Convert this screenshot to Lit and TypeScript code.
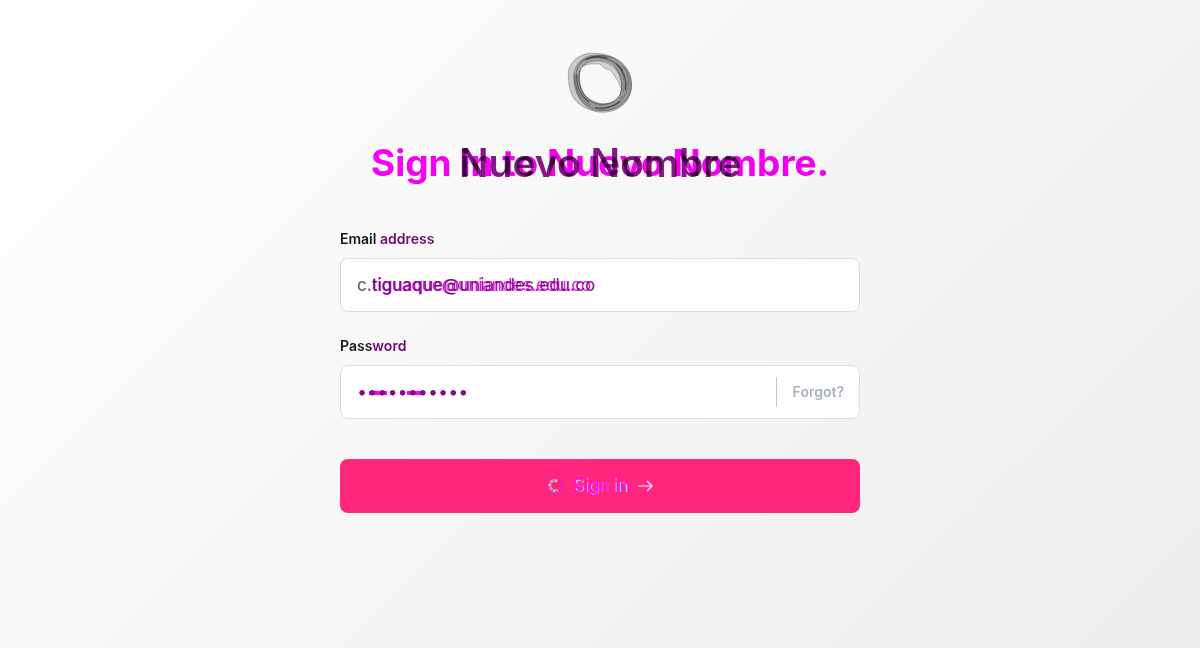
import { LitElement, html, css, svg } from "lit";
import { customElement, state } from "lit/decorators.js";

@customElement("brand-ring")
export class BrandRing extends LitElement {
  static styles = css`
    :host { display: block; line-height: 0; }
    svg { width: 66px; height: 61px; }
  `;

  render() {
    return html`<svg viewBox="52 36 200 184" role="img" aria-label="Nuevo Nombre">
      ${svg`
        <g stroke="#333" stroke-width="1.5" stroke-opacity=".65" fill="#777" fill-opacity=".36" fill-rule="evenodd">
          <path d="M56 103C55 80 72 50 111 41C152 34 202 47 222 76C246 99 256 138 241 168C229 198 202 215 168 218C138 220 104 207 84 189C64 171 56 142 56 103ZM79 103C74 132 87 169 116 184C142 201 187 204 211 181C234 156 228 106 199 77C171 52 139 49 112 57C93 66 82 86 79 103Z"/>
          <path d="M72 112C74 82 88 57 118 48C154 36 202 55 224 81C251 111 252 151 229 181C204 211 163 219 133 212C98 200 72 160 72 112ZM89 101C86 138 100 168 129 183C158 199 194 194 210 170C223 144 218 106 195 84C173 65 144 59 119 65C101 73 92 84 89 101Z"/>
          <path d="M86 76C106 45 159 38 196 54C231 68 249 105 247 137C247 172 225 197 196 208C164 218 129 213 104 191C76 171 72 112 86 76ZM93 86C84 123 93 163 122 182C151 202 195 198 213 168C228 137 220 103 196 78C169 54 120 56 93 86Z"/>
        </g>
        <path d="M103 71C122 52 168 48 194 67C218 78 230 115 223 156C211 143 212 128 202 118C192 104 186 86 174 88C164 87 158 74 149 71C135 74 117 67 101 80Z" fill="#999" fill-opacity=".4" stroke="#777" stroke-width="1.5"/>
        <g fill="none" stroke="#222" stroke-opacity=".65">
          <path stroke-width="4" d="M82 104C80 137 93 169 120 188M137 204C165 209 192 203 214 185M108 59C130 47 156 47 174 55M203 72C223 93 235 119 229 150"/>
          <path stroke-width="2" d="M91 89C83 123 91 159 119 181C148 201 187 199 209 171C225 150 220 105 196 80M119 54C157 45 204 63 222 92"/>
          <path stroke-width="1.5" d="M74 98C73 140 87 175 124 199M221 78C245 107 243 147 219 179M92 72C108 49 147 42 187 52M150 211C180 207 210 191 220 168"/>
        </g>
      `}
    </svg>`;
  }
}

@customElement("app-root")
export class AppRoot extends LitElement {
  @state() private email = "c.tiguaque@uniandes.edu.co";
  @state() private password = "nombre12345";

  static styles = css`
    :host {
      display: block;
      min-height: 100vh;
      box-sizing: border-box;
      padding: 52px 24px 48px;
      background: linear-gradient(135deg, #fff, #ededed);
      font-family: Inter, "Liberation Sans", sans-serif;
      color: #15181b;
    }
    *, *::before { box-sizing: border-box; }
    main { display: flex; flex-direction: column; align-items: center; }
    .heading {
      display: grid;
      justify-items: center;
      margin: 24px 0 40px;
      font-size: 39px;
      line-height: 52px;
      font-weight: 600;
      white-space: nowrap;
    }
    .heading > * { grid-area: 1 / 1; }
    .brand { color: #8a148a; }
    .welcome { font-size: 37px; font-weight: 700; color: #980098; mix-blend-mode: color-burn; }
    form { width: 100%; max-width: 520px; display: flex; flex-direction: column; }
    .label { font-size: 14px; line-height: 20px; font-weight: 600; margin-bottom: 9px; }
    .tint { color: #740878; }
    .field {
      display: flex;
      align-items: center;
      height: 54px;
      margin-bottom: 24px;
      border: 1px solid #dcdddf;
      border-radius: 8px;
      background: #fefefe;
    }
    .entry { flex: 1; min-width: 0; display: grid; }
    .entry > * {
      grid-area: 1 / 1;
      width: 100%;
      margin: 0;
      padding: 0 16px;
      border: 0;
      outline: 0;
      background: none;
      font: 400 17px/24px Inter, sans-serif;
    }
    .entry > .echo {
      color: transparent;
      background: linear-gradient(90deg, transparent 32px, #e000e0 32px);
      background-clip: text;
      -webkit-background-clip: text;
      mix-blend-mode: color-burn;
      pointer-events: none;
    }
    .entry > .typed {
      font-weight: 500;
      color: transparent;
      background: linear-gradient(90deg, #63676e 32px, #80308a 32px);
      background-clip: text;
      -webkit-background-clip: text;
    }
    .entry > .secret {
      font-size: 18px;
      color: #850a8a;
      background:
        linear-gradient(#f0f, #f0f) 28px 11px / 18px 4px no-repeat,
        linear-gradient(#f0f, #f0f) 66px 11px / 18px 4px no-repeat;
    }
    .forgot {
      border-left: 1px solid #c4c8cc;
      padding: 0 15px 0 16px;
      font-size: 14px;
      line-height: 30px;
      font-weight: 600;
      color: #a9b2bd;
      text-decoration: none;
    }
    .submit {
      display: flex;
      align-items: center;
      justify-content: center;
      gap: 8px;
      height: 54px;
      margin-top: 16px;
      border: 0;
      border-radius: 8px;
      background: #ff267c;
      color: #fff;
      font: 500 17px/24px Inter, sans-serif;
    }
    .spinner { width: 18px; height: 18px; }
    .caption { display: grid; justify-items: center; }
    .caption > * { grid-area: 1 / 1; }
    .front { color: #e8d5e0; }
    .shade { color: #f0f; font-size: 18px; font-weight: 400; }
    .arrow { width: 15px; height: 14px; }
  `;

  render() {
    return html`<main>
      <brand-ring></brand-ring>
      <h1 class="heading">
        <span class="brand">Nuevo Nombre</span>
        <span class="welcome">Sign in to Nuevo Nombre.</span>
      </h1>
      <form @submit=${(e: Event) => e.preventDefault()}>
        <label class="label" for="email">Email <span class="tint">address</span></label>
        <div class="field">
          <div class="entry">
            <input class="typed" id="email" type="email" .value=${this.email}
              @input=${(e: InputEvent) => (this.email = (e.target as HTMLInputElement).value)} />
            <span class="echo" aria-hidden="true">${this.email}</span>
          </div>
        </div>
        <label class="label" for="password">Pass<span class="tint">word</span></label>
        <div class="field">
          <div class="entry">
            <input class="secret" id="password" type="password" .value=${this.password}
              @input=${(e: InputEvent) => (this.password = (e.target as HTMLInputElement).value)} />
          </div>
          <a class="forgot" href="#forgot">Forgot?</a>
        </div>
        <button class="submit" type="submit">
          <svg class="spinner" viewBox="0 0 18 18" fill="none" aria-hidden="true">
            <circle cx="9" cy="9" r="7" stroke="#e81fc0" stroke-width="4" stroke-dasharray="2 2"/>
            <path d="M10 4.5C6 2 3 5 3 8C3 13 7 15 11 13" stroke="#c4b1b9" stroke-width="3" stroke-dasharray="3 1"/>
          </svg>
          <span class="caption">
            <span class="front">Sign in</span>
            <span class="shade" aria-hidden="true">Sign in</span>
          </span>
          <svg class="arrow" viewBox="0 0 15 14" fill="none" stroke="#fff" aria-hidden="true">
            <path d="M9 2L14 7L9 12" stroke="#ff70f0" stroke-width="2"/><path d="M0 7H14M9 2L14 7L9 12"/>
          </svg>
        </button>
      </form>
    </main>`;
  }
}
